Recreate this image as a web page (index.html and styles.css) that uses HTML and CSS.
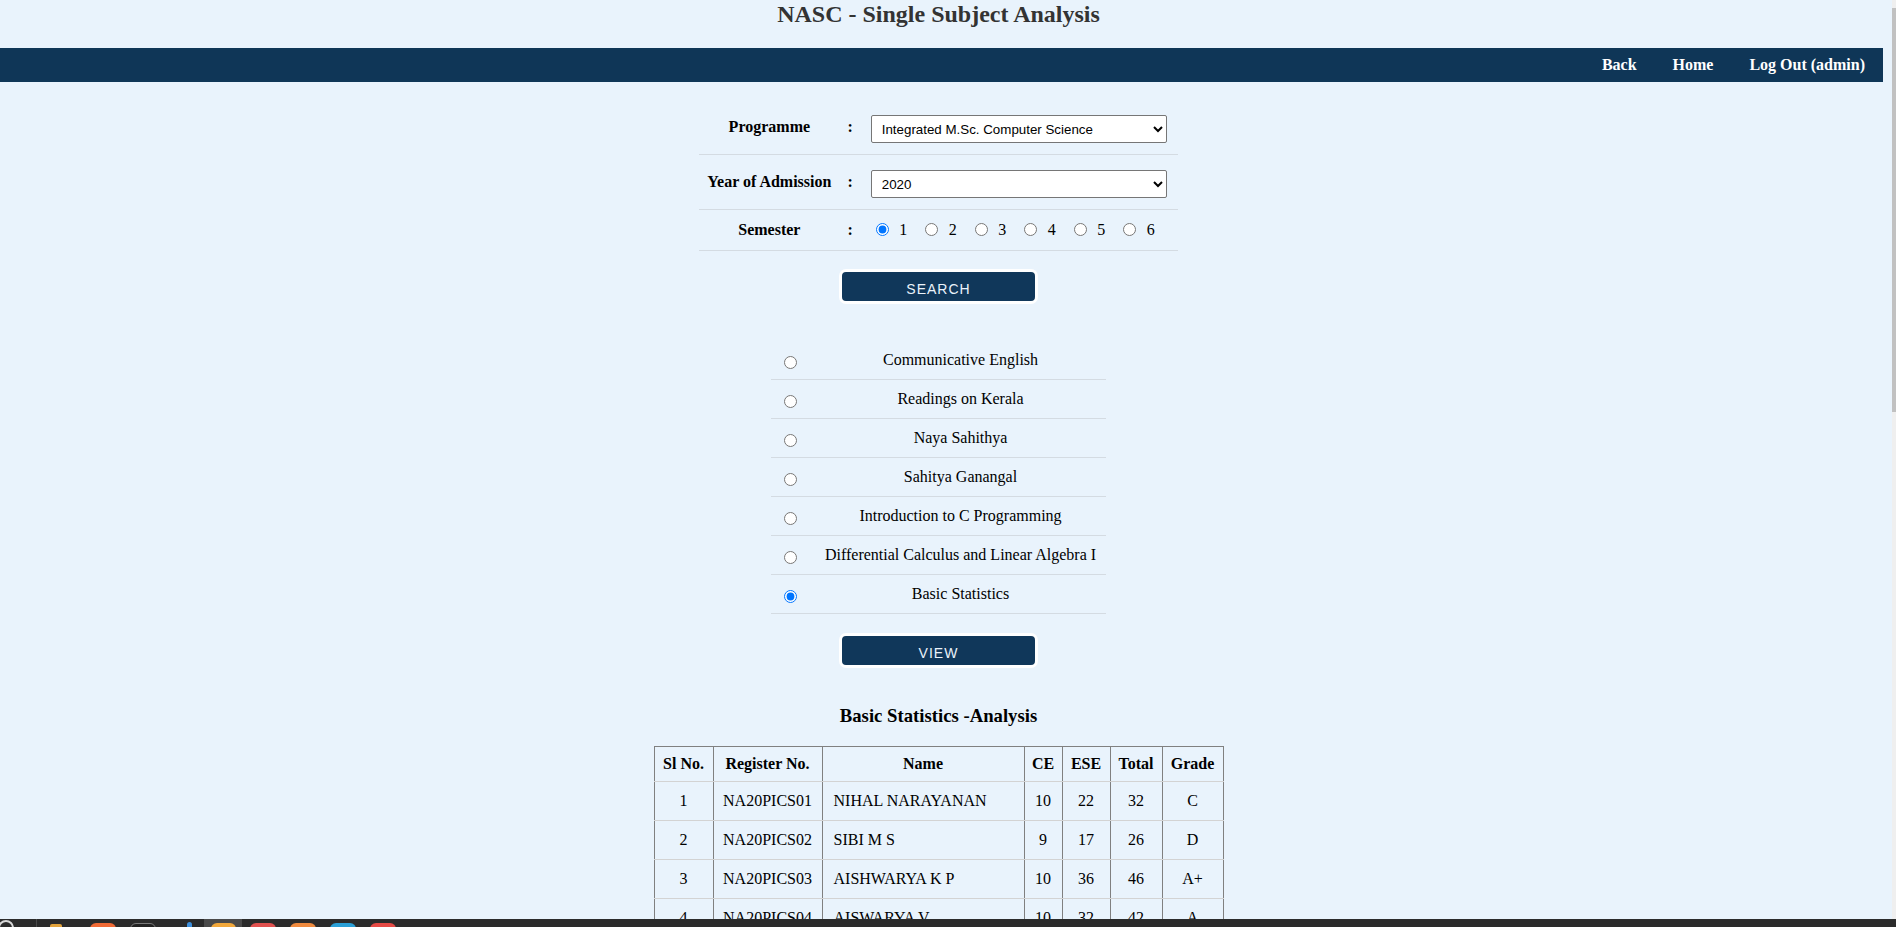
FILE: index.html
```html
<!DOCTYPE html>
<html lang="en">
<head>
<meta charset="utf-8">
<title>NASC - Single Subject Analysis</title>
<link rel="stylesheet" href="styles.css">
</head>
<body>
<h1 class="title">NASC - Single Subject Analysis</h1>
<nav class="topnav">
  <a class="navlink" href="#">Back</a>
  <a class="navlink" href="#">Home</a>
  <a class="navlink" href="#">Log Out (admin)</a>
</nav>
<main class="main">
  <table class="filter">
    <tr class="frow">
      <th class="flabel">Programme</th>
      <td class="fcolon">:</td>
      <td class="ffield"><select class="fselect"><option>Integrated M.Sc. Computer Science</option></select></td>
    </tr>
    <tr class="frow">
      <th class="flabel">Year of Admission</th>
      <td class="fcolon">:</td>
      <td class="ffield"><select class="fselect"><option>2020</option></select></td>
    </tr>
    <tr class="frow">
      <th class="flabel">Semester</th>
      <td class="fcolon">:</td>
      <td class="ffield">
        <div class="semlist">
          <label class="sem"><input class="semradio" type="radio" name="sem" checked><span class="semnum">1</span></label>
          <label class="sem"><input class="semradio" type="radio" name="sem"><span class="semnum">2</span></label>
          <label class="sem"><input class="semradio" type="radio" name="sem"><span class="semnum">3</span></label>
          <label class="sem"><input class="semradio" type="radio" name="sem"><span class="semnum">4</span></label>
          <label class="sem"><input class="semradio" type="radio" name="sem"><span class="semnum">5</span></label>
          <label class="sem"><input class="semradio" type="radio" name="sem"><span class="semnum">6</span></label>
        </div>
      </td>
    </tr>
  </table>

  <button class="btn btn-search" type="button">SEARCH</button>

  <table class="subjects">
    <colgroup><col class="scol-radio"><col class="scol-name"></colgroup>
    <tr class="srow"><td class="sradio"><input class="subradio" type="radio" name="sub"></td><td class="sname">Communicative English</td></tr>
    <tr class="srow"><td class="sradio"><input class="subradio" type="radio" name="sub"></td><td class="sname">Readings on Kerala</td></tr>
    <tr class="srow"><td class="sradio"><input class="subradio" type="radio" name="sub"></td><td class="sname">Naya Sahithya</td></tr>
    <tr class="srow"><td class="sradio"><input class="subradio" type="radio" name="sub"></td><td class="sname">Sahitya Ganangal</td></tr>
    <tr class="srow"><td class="sradio"><input class="subradio" type="radio" name="sub"></td><td class="sname">Introduction to C Programming</td></tr>
    <tr class="srow"><td class="sradio"><input class="subradio" type="radio" name="sub"></td><td class="sname">Differential Calculus and Linear Algebra I</td></tr>
    <tr class="srow"><td class="sradio"><input class="subradio" type="radio" name="sub" checked></td><td class="sname">Basic Statistics</td></tr>
  </table>

  <button class="btn btn-view" type="button">VIEW</button>

  <h3 class="rtitle">Basic Statistics -Analysis</h3>

  <table class="results">
    <colgroup>
      <col class="c-sl"><col class="c-reg"><col class="c-name"><col class="c-ce"><col class="c-ese"><col class="c-tot"><col class="c-grade">
    </colgroup>
    <thead>
      <tr><th class="rh">Sl No.</th><th class="rh">Register No.</th><th class="rh">Name</th><th class="rh">CE</th><th class="rh">ESE</th><th class="rh">Total</th><th class="rh">Grade</th></tr>
    </thead>
    <tbody>
      <tr><td class="rc">1</td><td class="rc">NA20PICS01</td><td class="rc rname">NIHAL NARAYANAN</td><td class="rc">10</td><td class="rc">22</td><td class="rc">32</td><td class="rc">C</td></tr>
      <tr><td class="rc">2</td><td class="rc">NA20PICS02</td><td class="rc rname">SIBI M S</td><td class="rc">9</td><td class="rc">17</td><td class="rc">26</td><td class="rc">D</td></tr>
      <tr><td class="rc">3</td><td class="rc">NA20PICS03</td><td class="rc rname">AISHWARYA K P</td><td class="rc">10</td><td class="rc">36</td><td class="rc">46</td><td class="rc">A+</td></tr>
      <tr><td class="rc">4</td><td class="rc">NA20PICS04</td><td class="rc rname">AISWARYA V</td><td class="rc">10</td><td class="rc">32</td><td class="rc">42</td><td class="rc">A</td></tr>
    </tbody>
  </table>
</main>

<div class="scrollbar"><div class="scrollthumb"></div></div>

<div class="taskbar">
  <span class="tb tb-start"></span>
  <span class="tb tb-sep"></span>
  <span class="tb tb-yellow"></span>
  <span class="tb tb-orange"></span>
  <span class="tb tb-term"></span>
  <span class="tb tb-dot"></span>
  <span class="tb tb-active"><span class="tb-inner"></span></span>
  <span class="tb tb-red"></span>
  <span class="tb tb-orange2"></span>
  <span class="tb tb-blue"></span>
  <span class="tb tb-red2"></span>
</div>
</body>
</html>
```

FILE: styles.css
```css
html {
  margin: 0;
  padding: 0;
  background: #e9f3fc;
}

body {
  margin: 0 13px 0 0;
  padding: 0;
  background: #e9f3fc;
  font-family: "Liberation Serif", "Times New Roman", serif;
  font-size: 16px;
  line-height: 18px;
  color: #000;
}

.title {
  margin: 0 0 20px;
  padding-right: 6px;
  font-size: 24px;
  line-height: 28px;
  font-weight: bold;
  text-align: center;
  color: #333;
}

.topnav {
  display: flex;
  justify-content: flex-end;
  height: 34px;
  background: #0f3657;
}

.navlink {
  padding: 0 18px;
  line-height: 34px;
  color: #fff;
  font-weight: bold;
  text-decoration: none;
}

.main {
  padding-right: 6px;
  padding-bottom: 60px;
}

/* filter form */
.filter {
  margin: 18px auto 0;
  border-collapse: collapse;
}

.frow {
  border-bottom: 1px solid #d4dbe2;
}

.flabel {
  padding: 11px 8px;
  font-weight: bold;
  text-align: center;
  vertical-align: middle;
  white-space: nowrap;
}

.fcolon {
  padding: 11px 8px;
  font-weight: bold;
  text-align: center;
  vertical-align: middle;
}

.ffield {
  padding: 11px 10px;
  vertical-align: middle;
}

.fselect {
  display: block;
  width: 296px;
  height: 28px;
  margin: 4px 0 0;
  padding: 0 6px;
  box-sizing: border-box;
  font-family: "Liberation Sans", Arial, sans-serif;
  font-size: 13.33px;
  color: #000;
  background: #fff;
  border: 1px solid #767676;
  border-radius: 2px;
}

.semlist {
  display: flex;
  height: 18px;
  align-items: center;
}

.sem {
  display: inline-flex;
  align-items: center;
  height: 18px;
  margin-right: 13px;
}

.semradio {
  width: 13px;
  height: 13px;
  margin: 0 0 2px 5px;
}

.semnum {
  margin-left: 10.5px;
}

/* buttons */
.btn {
  display: flex;
  align-items: center;
  justify-content: center;
  width: 199px;
  height: 35px;
  margin: 18px auto 0;
  padding: 5px 0 0;
  box-sizing: border-box;
  border: 3px solid #fff;
  border-radius: 7px;
  background: #10375a;
  color: #eaf2fa;
  font-family: "Liberation Sans", Arial, sans-serif;
  font-size: 14px;
  line-height: 16px;
  letter-spacing: 1px;
}

.btn-view {
  margin-top: 19px;
}

/* subject list */
.subjects {
  width: 335px;
  margin: 37px auto 0;
  border-collapse: collapse;
  table-layout: fixed;
}

.scol-radio { width: 44px; }
.scol-name { width: 291px; }

.srow {
  border-bottom: 1px solid #d4dbe2;
}

.sradio {
  padding: 0 0 0 13px;
  vertical-align: middle;
}

.subradio {
  display: block;
  width: 13px;
  height: 13px;
  margin: 4px 0 0;
}

.sname {
  padding: 10px 0;
  text-align: center;
  vertical-align: middle;
}

/* result */
.rtitle {
  margin: 37px 0 19px;
  font-size: 18.72px;
  line-height: 22px;
  font-weight: bold;
  text-align: center;
}

.results {
  width: 569px;
  margin: 0 auto;
  border-collapse: collapse;
  table-layout: fixed;
  border: 1px solid #808080;
}

.c-sl { width: 59px; }
.c-reg { width: 109px; }
.c-name { width: 202px; }
.c-ce { width: 38px; }
.c-ese { width: 48px; }
.c-tot { width: 52px; }
.c-grade { width: 61px; }

.rh {
  padding: 8px 0;
  font-weight: bold;
  text-align: center;
  white-space: nowrap;
  border-top: 1px solid #808080;
  border-bottom: 1px solid #d3d3d3;
  border-left: 1px solid #808080;
  border-right: 1px solid #808080;
}

.rc {
  padding: 10px 0;
  text-align: center;
  white-space: nowrap;
  border-top: 1px solid #d3d3d3;
  border-bottom: 1px solid #d3d3d3;
  border-left: 1px solid #808080;
  border-right: 1px solid #808080;
}

.rc.rname {
  padding-left: 11px;
  text-align: left;
}

/* browser scrollbar at the right edge of the screenshot */
.scrollbar {
  position: fixed;
  top: 0;
  right: 0;
  bottom: 0;
  width: 4px;
  background: #efefef;
}

.scrollthumb {
  height: 404px;
  margin-top: 8px;
  background: #c1c1c1;
}

/* taskbar strip at bottom of the screenshot */
.taskbar {
  position: fixed;
  left: 0;
  right: 0;
  bottom: 0;
  height: 8px;
  display: flex;
  overflow: hidden;
  background: #2b2b2b;
}

.tb {
  flex: none;
  display: block;
  height: 12px;
  margin-top: 4px;
  border-radius: 6px 6px 0 0;
}

.tb-start {
  width: 16px;
  height: 16px;
  margin-top: 1px;
  margin-left: -2px;
  border-radius: 50%;
  border: 2px solid #d8d8d8;
  box-sizing: border-box;
}

.tb-sep {
  width: 1px;
  height: 8px;
  margin-top: 0;
  margin-left: 22px;
  border-radius: 0;
  background: #4a4a4a;
}

.tb-yellow {
  width: 12px;
  margin-left: 13px;
  margin-top: 5px;
  border-radius: 2px;
  background: #e3a33b;
}

.tb-orange {
  width: 26px;
  margin-left: 28px;
  background: #f06a35;
}

.tb-term {
  width: 26px;
  margin-left: 14px;
  box-sizing: border-box;
  border: 1px solid #7a7a7a;
  background: #222;
}

.tb-dot {
  width: 5px;
  margin-left: 31px;
  margin-top: 3px;
  border-radius: 3px 3px 0 0;
  background: #3d8fdc;
}

.tb-active {
  width: 38px;
  height: 8px;
  margin-top: 0;
  margin-left: 12px;
  border-radius: 0;
  background: #4a4a4a;
  display: flex;
}

.tb-inner {
  display: block;
  width: 25px;
  height: 12px;
  margin: 4px 0 0 7px;
  border-radius: 6px 6px 0 0;
  background: #f2a83b;
}

.tb-red {
  width: 26px;
  margin-left: 8px;
  background: #e0514f;
}

.tb-orange2 {
  width: 26px;
  margin-left: 14px;
  background: #ef8a3e;
}

.tb-blue {
  width: 26px;
  margin-left: 14px;
  background: #2a9fd6;
}

.tb-red2 {
  width: 26px;
  margin-left: 14px;
  background: #e54a45;
}
```
